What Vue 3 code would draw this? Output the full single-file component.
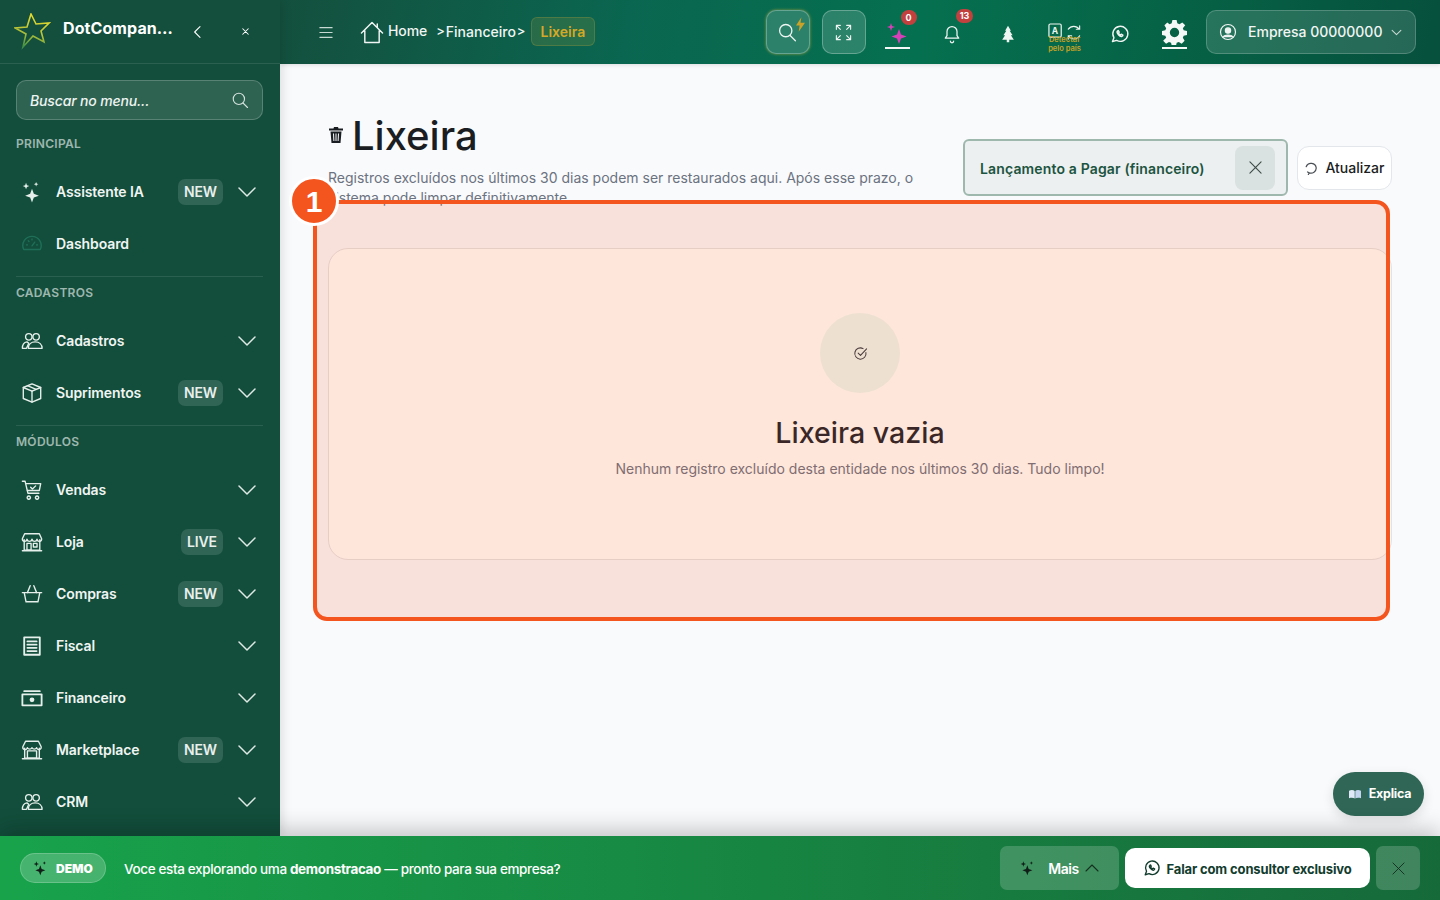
<template>
  <div class="app">
    <div class="top">
      <aside class="sidebar">
        <div class="side-head">
          <svg class="logo" viewBox="0 0 37 37" fill="none">
            <defs>
              <linearGradient id="star" x1="0.6" y1="0" x2="0.3" y2="1">
                <stop offset="0" stop-color="#e6dc2e" />
                <stop offset="0.55" stop-color="#b9c437" />
                <stop offset="1" stop-color="#3f8f45" />
              </linearGradient>
            </defs>
            <path d="M17 1L22 11 35 10 27 18 30 29 19 23 9 34 12 21 1 15 13 14Z" stroke="url(#star)" stroke-width="1.6" stroke-linejoin="miter" />
          </svg>
          <span class="brand">DotCompan…</span>
          <svg class="head-back" viewBox="0 0 24 24" fill="none" stroke="#fff" stroke-width="1.6" stroke-linecap="round" stroke-linejoin="round"><path d="M15 4l-8 8 8 8" /></svg>
          <svg class="head-x" viewBox="0 0 24 24" fill="none" stroke="#fff" stroke-width="2.2" stroke-linecap="round"><path d="M6 6l12 12M18 6L6 18" /></svg>
        </div>
        <div class="side-body">
          <div class="search">
            <span>Buscar no menu...</span>
            <svg viewBox="0 0 24 24" fill="none" stroke="#d5e2dd" stroke-width="1.5" stroke-linecap="round"><circle cx="10.5" cy="10.5" r="7.5" /><path d="M16 16l6 6" /></svg>
          </div>
          <template v-for="(section, i) in sections" :key="section.title">
            <div v-if="i > 0" class="divider"></div>
            <div class="label">{{ section.title }}</div>
            <ul class="nav">
              <li v-for="item in section.items" :key="item.text" class="nav-item">
                <svg class="nav-icon" :class="{ dim: item.icon === 'gauge', bold: item.icon === 'money' || item.icon === 'receipt' }" viewBox="0 0 24 24" fill="none" stroke="currentColor" stroke-width="1.5" stroke-linecap="round" stroke-linejoin="round">
                  <path v-for="d in icons[item.icon]" :key="d" :d="d" />
                  <circle v-if="item.icon === 'money'" cx="12" cy="14" r="2.600" fill="currentColor" stroke="none" />
                  <path v-if="item.icon === 'sparkles'" d="M12 8.500l2 5.500 5.500 2-5.500 2-2 5.500-2-5.500-5.500-2 5.500-2zM5.500 2l1 2.500 2.500 1-2.500 1-1 2.500-1-2.500-2.500-1 2.500-1zM16.500 1l.7 1.800 1.800.7-1.800.7-.7 1.800-.7-1.800-1.800-.7 1.800-.7z" fill="currentColor" stroke="none" />
                </svg>
                <span class="nav-text">{{ item.text }}</span>
                <span v-if="item.badge" class="badge">{{ item.badge }}</span>
                <svg v-if="item.arrow !== false" class="chev" viewBox="0 0 18 10" fill="none" stroke="currentColor" stroke-width="1.5" stroke-linecap="round" stroke-linejoin="round"><path d="M1 1l8 8 8-8" /></svg>
              </li>
            </ul>
          </template>
        </div>
      </aside>

      <div class="right">
        <header class="header">
          <svg class="menu" viewBox="0 0 16 14" fill="none" stroke="#c8d9d3" stroke-width="1.3" stroke-linecap="round"><path d="M1 1.500h14M1 7h14M1 12.500h14" /></svg>
          <nav class="crumbs">
            <svg class="home" viewBox="0 0 24 24" fill="none" stroke="#f0f5f3" stroke-width="1.5" stroke-linejoin="round" stroke-linecap="round"><path d="M1 12.500L12 1.500l11 11M4.500 10v12.500h15V10M17.500 3v3.500" /></svg>
            <span class="crumb home-text">Home</span>
            <span class="sep first">&gt;</span>
            <span class="crumb">Financeiro</span>
            <span class="sep">&gt;</span>
            <span class="current">Lixeira</span>
          </nav>
          <div class="tools">
            <button class="tool-btn glow">
              <svg viewBox="0 0 24 24" fill="none" stroke="#eef5f2" stroke-width="1.5" stroke-linecap="round" class="t-search"><circle cx="10" cy="11" r="7" /><path d="M15 16.500l6 6" /></svg>
              <svg viewBox="0 0 10 16" class="bolt"><path d="M6 0L0 9h4l-1 7 7-10H5z" fill="#c9a227" /></svg>
            </button>
            <button class="tool-btn">
              <svg viewBox="0 0 24 24" fill="none" stroke="#eef5f2" stroke-width="1.4" stroke-linecap="round" stroke-linejoin="round" class="t-expand"><path d="M8 3H3v5M16 3h5v5M8 21H3v-5M16 21h5v-5M3 3l5 5M21 3l-5 5M3 21l5-5M21 21l-5-5" /></svg>
            </button>
            <div class="cells">
              <div class="cell underline">
                <svg viewBox="0 0 24 24" class="i24"><path d="M14 9l2 5.500 5.500 2-5.500 2-2 5.500-2-5.500-5.500-2 5.500-2zM6 3l1 3 3 1-3 1-1 3-1-3-3-1 3-1z" fill="#d63fb8" /></svg>
                <span class="count c0">0</span>
              </div>
              <div class="cell">
                <svg viewBox="0 0 24 24" fill="none" stroke="#f0f5f3" stroke-width="1.500" stroke-linecap="round" stroke-linejoin="round" class="i20 low shift-l"><path d="M12 3a6 6 0 0 0-6 6v5l-2 3h16l-2-3V9a6 6 0 0 0-6-6zM10 20.500a2 2 0 0 0 4 0" /></svg>
                <span class="count c13">13</span>
              </div>
              <div class="cell">
                <svg viewBox="0 0 24 24" class="i20 low"><path d="M12 2l3.500 6H14l3.500 5.500H15.500L19 19h-5.500v3h-3v-3H5l3.500-5.500H6.500L10 8H8.500z" fill="#eef5f2" /></svg>
              </div>
              <div class="cell translate">
                <svg viewBox="0 0 36 20" fill="none" class="i-tr">
                  <rect x="1" y="1" width="13" height="14" rx="1.500" stroke="#eef5f2" stroke-width="1.300" />
                  <text x="4" y="12" font-size="9" font-weight="700" fill="#eef5f2" font-family="Inter, sans-serif">A</text>
                  <path d="M21.500 6.500a7 7 0 0 1 11.500 0M33.500 13.500a7 7 0 0 1-12 0M33.500 3v3.500H30M21.500 17v-3.500H25" stroke="#eef5f2" stroke-width="1.200" stroke-linecap="round" />
                </svg>
                <span class="detect">Detectar<br />pelo país</span>
              </div>
              <div class="cell">
                <svg viewBox="0 0 24 24" fill="none" stroke="#f0f5f3" stroke-width="1.700" stroke-linecap="round" stroke-linejoin="round" class="i20 low shift-r">
                  <path v-for="d in whatsapp" :key="d" :d="d" />
                </svg>
              </div>
              <div class="cell underline">
                <svg viewBox="0 0 24 24" class="i26"><path fill-rule="evenodd" d="M10 1h4l.7 3.200 2 .8 2.800-1.700 2.800 2.800L20 8.900l.8 2 3.200.7v3.800l-3.200.7-.8 2 1.700 2.800-2.800 2.800-2.800-1.700-2 .8-.7 3.200h-4l-.7-3.200-2-.8-2.800 1.700-2.800-2.800L4 18.100l-.8-2L0 15.400v-3.800l3.200-.7.8-2-1.700-2.800 2.800-2.800L7.300 5l2-.8zM12 8.500a4.500 4.500 0 1 0 0 9 4.500 4.500 0 0 0 0-9z" fill="#f4f8f6" transform="translate(0 -1)" /></svg>
              </div>
            </div>
            <button class="company">
              <svg viewBox="0 0 24 24" fill="none" stroke="#f0f5f3" stroke-width="1.600" class="i18"><circle cx="12" cy="12" r="10" /><circle cx="12" cy="10" r="3.500" fill="#f0f5f3" /><path d="M5 19c2-4 12-4 14 0" fill="#f0f5f3" /></svg>
              <span>Empresa 00000000</span>
              <svg viewBox="0 0 12 8" fill="none" stroke="#c8d9d3" stroke-width="1.200" stroke-linecap="round" stroke-linejoin="round" class="co-chev"><path d="M1 1.500l5 5 5-5" /></svg>
            </button>
          </div>
        </header>

        <main class="main">
          <div class="page-head">
            <div class="page-title">
              <h1>
                <svg viewBox="0 0 14 16" class="trash"><path d="M5 0h4l.5 1.500H14V3.500H0V1.500h4.500zM1.500 4.500h11l-1 11.500h-9zM4 6.500l.4 7.500h1L5 6.500zM6.500 6.500V14h1V6.500zM9 6.500L8.600 14h1l.4-7.500z" fill-rule="evenodd" fill="#1a1d21" /></svg>
                Lixeira
              </h1>
              <p>Registros excluídos nos últimos 30 dias podem ser restaurados aqui. Após esse prazo, o sistema pode limpar definitivamente.</p>
            </div>
            <div class="actions">
              <div class="filter">
                <span>Lançamento a Pagar (financeiro)</span>
                <button class="filter-x">
                  <svg viewBox="0 0 14 14" fill="none" stroke="#3d4a47" stroke-width="1.200" stroke-linecap="round"><path d="M1 1l12 12M13 1L1 13" /></svg>
                </button>
              </div>
              <button class="refresh">
                <svg viewBox="0 0 16 16" fill="none" stroke="#4a4f55" stroke-width="1.400" stroke-linecap="round" stroke-linejoin="round"><path d="M2.500 6.500A6 6 0 0 1 14 8a6 6 0 0 1-8 5.500M5 15.500l1-2-2-1" /></svg>
                Atualizar
              </button>
            </div>
          </div>

          <section class="empty">
            <div class="circle">
              <svg viewBox="0 0 16 16" fill="none" stroke="#2c3640" stroke-width="1.100" stroke-linecap="round" stroke-linejoin="round"><path d="M13.800 7a6 6 0 1 1-3-4.200M5.500 7.500L8 10l6.500-7" /></svg>
            </div>
            <h2>Lixeira vazia</h2>
            <p>Nenhum registro excluído desta entidade nos últimos 30 dias. Tudo limpo!</p>
          </section>
        </main>
      </div>
    </div>

    <footer class="banner">
      <span class="demo">
        <svg viewBox="0 0 24 24" class="spark"><path d="M11 8l2 5.500 5.500 2-5.500 2-2 5.500-2-5.500-5.500-2 5.500-2zM5 2l1 3 3 1-3 1-1 3-1-3-3-1 3-1zM17 2l.7 1.800 1.800.7-1.800.7L17 7l-.7-1.800-1.800-.7 1.800-.7z" fill="#0f1f18" /></svg>
        DEMO
      </span>
      <span class="banner-text">Voce esta explorando uma <b>demonstracao</b> — pronto para sua empresa?</span>
      <button class="ban-btn more">
        <svg viewBox="0 0 24 24" class="spark"><path d="M11 8l2 5.500 5.500 2-5.500 2-2 5.500-2-5.500-5.500-2 5.500-2zM5 2l1 3 3 1-3 1-1 3-1-3-3-1 3-1zM17 2l.7 1.800 1.800.7-1.800.7L17 7l-.7-1.800-1.800-.7 1.800-.7z" fill="#0f1f18" /></svg>
        <span>Mais</span>
        <svg viewBox="0 0 14 8" fill="none" stroke="#16301f" stroke-width="1.100" stroke-linecap="round" stroke-linejoin="round" class="up"><path d="M1 7l6-6 6 6" /></svg>
      </button>
      <button class="consult">
        <svg viewBox="0 0 24 24" fill="none" stroke="#123c2e" stroke-width="1.800" stroke-linecap="round" stroke-linejoin="round" class="i18">
          <path v-for="d in whatsapp" :key="d" :d="d" />
        </svg>
        <span>Falar com consultor exclusivo</span>
      </button>
      <button class="ban-btn close">
        <svg viewBox="0 0 14 14" fill="none" stroke="#16301f" stroke-width="1" stroke-linecap="round"><path d="M1 1l12 12M13 1L1 13" /></svg>
      </button>
    </footer>

    <!-- overlays -->
    <div class="hl"></div>
    <div class="hl-num">1</div>
    <button class="explain">
      <svg viewBox="0 0 16 12" class="book"><path d="M0 1.500C3 .5 6 .5 7.600 2v10C6 10.700 3 10.700 0 11.500z" fill="#dfe9f7" /><path d="M16 1.500C13 .5 10 .5 8.400 2v10c1.600-1.300 4.600-1.300 7.600-.5z" fill="#c2d4ee" /></svg>
      Explica
    </button>
  </div>
</template>

<script setup>
const whatsapp = [
  'M3 21l1.700-4.600A9 9 0 1 1 8 19.600z',
  'M9 8.500c-.8.800-.6 2.300.8 4 1.500 1.700 3.300 2.800 4.500 2.300.6-.2 1.200-.8 1.200-1.500l-2-1-.9.800c-1-.4-2-1.500-2.400-2.400l.8-.9-1-2c-.4 0-.7.300-1 .7z'
]

const icons = {
  sparkles: [],
  gauge: ['M3 18a10 10 0 1 1 18 0z', 'M12 14l3-4', 'M6 13h1M17 13h1M8 8.500l.7.700M12 6.500v1'],
  users: ['M8.500 4a3.500 3.500 0 1 1 0 7 3.500 3.500 0 0 1 0-7z', 'M16.500 4a3.500 3.500 0 1 1 0 7 3.500 3.500 0 0 1 0-7z', 'M1.500 20c0-3.500 2-6.500 5-7l2 1.500L6 20z', 'M8 20c0-4 3-7 7.500-7s7.500 3 7.500 7z'],
  box: ['M12 2l9.500 4v12L12 22l-9.500-4V6z', 'M2.500 6L12 10l9.500-4', 'M12 10v12', 'M7 4l9.500 4'],
  cart: ['M1.500 2.500h3l3 13h12', 'M5.500 5h16l-1.500 7.500H7', 'M10.500 9l2 2 3.500-3.500', 'M8.500 18.500a1.800 1.800 0 1 0 .01 0zM17.500 18.500a1.800 1.800 0 1 0 .01 0z'],
  shop: ['M3.500 9.500V21h17V9.500', 'M1.500 21.500h21', 'M4 3h16l2.500 5.500a2.500 2.500 0 0 1-5 .5 2.800 2.800 0 0 1-5.500 0 2.800 2.800 0 0 1-5.500 0 2.500 2.500 0 0 1-5-.5z', 'M6.500 13.500h4.500V21H6.500zM13.500 13.500h4v4h-4z'],
  basket: ['M1.500 10.500h21', 'M3.500 10.500l2 10h13l2-10', 'M7 10.500L10 3M17 10.500L14 3'],
  receipt: ['M3.500 2.500h17v19h-17z', 'M7 7h10M7 10.500h10M7 14h10M7 17.500h10'],
  money: ['M3.500 4.500h17', 'M1.500 8h21v12H1.500z'],
  market: ['M4 10v11h16V10', 'M1.500 21.500h21', 'M5 2.500h14l3 6a2.500 2.500 0 0 1-5 1 2.800 2.800 0 0 1-5 0 2.800 2.800 0 0 1-5 0 2.500 2.500 0 0 1-5-1z', 'M7 13h10v8H7z']
}

const sections = [
  {
    title: 'PRINCIPAL',
    items: [
      { text: 'Assistente IA', icon: 'sparkles', badge: 'NEW' },
      { text: 'Dashboard', icon: 'gauge', arrow: false }
    ]
  },
  {
    title: 'CADASTROS',
    items: [
      { text: 'Cadastros', icon: 'users' },
      { text: 'Suprimentos', icon: 'box', badge: 'NEW' }
    ]
  },
  {
    title: 'MÓDULOS',
    items: [
      { text: 'Vendas', icon: 'cart' },
      { text: 'Loja', icon: 'shop', badge: 'LIVE' },
      { text: 'Compras', icon: 'basket', badge: 'NEW' },
      { text: 'Fiscal', icon: 'receipt' },
      { text: 'Financeiro', icon: 'money' },
      { text: 'Marketplace', icon: 'market', badge: 'NEW' },
      { text: 'CRM', icon: 'users' }
    ]
  }
]
</script>

<style>
html, body {
  margin: 0;
  height: 100%;
  overflow: hidden;
  background: #f9fafc;
}
</style>

<style scoped>
.app {
  position: relative;
  width: 1440px;
  height: 900px;
  overflow: hidden;
  display: flex;
  flex-direction: column;
  font-family: Inter, "Liberation Sans", sans-serif;
  color: #1a1d21;
}
button {
  font-family: inherit;
  cursor: pointer;
}
.top {
  flex: 1;
  min-height: 0;
  display: flex;
}

/* sidebar */
.sidebar {
  width: 280px;
  flex-shrink: 0;
  background: #124e3b;
  color: #f0f5f3;
  overflow: hidden;
  box-shadow: 2px 0 10px rgba(0, 0, 0, 0.12);
  z-index: 2;
}
.side-head {
  height: 63px;
  border-bottom: 1px solid rgba(255, 255, 255, 0.1);
  background: #144f3d;
  display: flex;
  align-items: center;
  padding-left: 14px;
}
.logo {
  width: 37px;
  height: 37px;
  flex-shrink: 0;
}
.brand {
  width: 113px;
  margin-left: 12px;
  margin-top: -7px;
  font-size: 16px;
  font-weight: 700;
  letter-spacing: 0.1px;
  color: #fff;
  white-space: nowrap;
}
.head-back {
  width: 16px;
  height: 16px;
  margin-left: 14px;
}
.head-x {
  width: 11px;
  height: 11px;
  margin-left: 34px;
}
.side-body {
  padding: 16px 17px 0 16px;
}
.search {
  height: 38px;
  border: 1px solid rgba(255, 255, 255, 0.2);
  background: rgba(255, 255, 255, 0.12);
  border-radius: 10px;
  display: flex;
  align-items: center;
  justify-content: space-between;
  padding: 0 13px;
  font-size: 14px;
  font-style: italic;
  font-weight: 500;
  letter-spacing: -0.15px;
  color: #eef4f1;
}
.search svg {
  width: 18px;
  height: 18px;
}
.label {
  margin-top: 16px;
  height: 16px;
  line-height: 16px;
  font-size: 12px;
  font-weight: 600;
  letter-spacing: 0.3px;
  color: rgba(255, 255, 255, 0.6);
}
.divider + .label {
  margin-top: 8px;
}
.divider {
  height: 1px;
  margin-top: 6px;
  background: rgba(255, 255, 255, 0.1);
}
.nav {
  list-style: none;
  margin: 14px 0 0;
  padding: 0;
}
.nav-item {
  height: 52px;
  display: flex;
  align-items: center;
  padding-left: 5px;
  font-size: 14px;
  font-weight: 600;
  letter-spacing: -0.1px;
}
.nav-icon {
  width: 22px;
  height: 22px;
  flex-shrink: 0;
  color: #e6efeb;
}
.nav-icon.dim {
  color: #1f6f58;
}
.nav-icon.bold {
  stroke-width: 2;
}
.nav-text {
  margin: -1px 0 0 13px;
  flex: 1;
}
.badge {
  height: 26px;
  line-height: 26px;
  padding: 0 6px;
  border-radius: 7px;
  background: rgba(255, 255, 255, 0.13);
  font-size: 14px;
  color: #e8f0ed;
}
.chev {
  width: 18px;
  height: 10px;
  margin: 0 7px 0 15px;
  color: #dfe9e5;
}

/* header */
.right {
  flex: 1;
  min-width: 0;
  display: flex;
  flex-direction: column;
}
.header {
  height: 64px;
  flex-shrink: 0;
  display: flex;
  align-items: center;
  padding: 0 24px 0 39px;
  background: linear-gradient(100deg, #14503e 0%, #0a6650 30%, #05704f 55%, #066044 80%, #06503d 100%);
  box-shadow: 0 1px 4px rgba(0, 0, 0, 0.12);
  z-index: 1;
}
.menu {
  width: 14px;
  height: 13px;
  flex-shrink: 0;
}
.crumbs {
  display: flex;
  align-items: center;
  margin: -2px 0 0 27px;
  color: #f0f5f3;
  font-size: 14px;
  font-weight: 500;
}
.home {
  width: 24px;
  height: 23px;
  margin-top: 2px;
}
.home-text {
  margin: -2px 0 0 4px;
  letter-spacing: -0.1px;
}
.sep {
  margin: 0 2px 0 1px;
  font-size: 13px;
}
.sep.first {
  margin: 0 1px 0 9px;
}
.current {
  margin-left: 3px;
  height: 27px;
  line-height: 27px;
  padding: 0 9px;
  border: 1px solid rgba(212, 175, 55, 0.22);
  border-radius: 6px;
  background: rgba(212, 175, 55, 0.14);
  color: #d4a927;
  font-weight: 600;
}
.tools {
  margin-left: auto;
  display: flex;
  align-items: center;
}
.tool-btn {
  position: relative;
  width: 44px;
  height: 44px;
  margin-right: 12px;
  padding: 0;
  display: flex;
  align-items: center;
  justify-content: center;
  border: 1px solid rgba(255, 255, 255, 0.28);
  border-radius: 10px;
  background: rgba(255, 255, 255, 0.15);
}
.tool-btn.glow {
  box-shadow: 0 0 3px rgba(212, 175, 55, 0.7);
}
.t-search {
  width: 21px;
  height: 21px;
  margin-top: -1px;
}
.bolt {
  position: absolute;
  top: 6px;
  right: 4px;
  width: 9px;
  height: 15px;
}
.t-expand {
  width: 19px;
  height: 19px;
}
.cells {
  display: grid;
  grid-template-columns: repeat(6, 55.4px);
  margin-left: -8px;
  margin-right: 4px;
}
.cell {
  position: relative;
  height: 44px;
  display: flex;
  align-items: center;
  justify-content: center;
}
.cell.underline::after {
  content: "";
  position: absolute;
  left: 15px;
  right: 15px;
  bottom: 5px;
  height: 2px;
  background: #f4f8f6;
}
.i24 {
  width: 24px;
  height: 24px;
}
.i20 {
  width: 20px;
  height: 20px;
}
.low {
  margin-top: 4px;
}
.shift-l {
  margin-left: -2px;
}
.shift-r {
  margin-left: 2px;
}
.i26 {
  width: 25px;
  height: 25px;
  margin-top: 1px;
}
.i18 {
  width: 18px;
  height: 18px;
}
.count {
  position: absolute;
  border-radius: 999px;
  background: #c2413f;
  color: #fff;
  font-size: 9px;
  font-weight: 700;
  text-align: center;
}
.c0 {
  top: 0;
  left: 31px;
  width: 16px;
  height: 15px;
  line-height: 15px;
}
.c13 {
  top: -1px;
  left: 31px;
  width: 17px;
  height: 14px;
  line-height: 14px;
}
.translate {
  flex-direction: column;
  justify-content: flex-start;
  padding-top: 13px;
  height: 31px;
}
.i-tr {
  width: 34px;
  height: 19px;
  flex-shrink: 0;
  margin-left: 2px;
}
.detect {
  margin: -6px 0 0 2px;
  color: #c9a227;
  font-size: 7.500px;
  font-weight: 600;
  line-height: 8.500px;
  text-align: center;
  white-space: nowrap;
}
.company {
  width: 210px;
  height: 44px;
  display: flex;
  align-items: center;
  padding: 0 13px 0 12px;
  border: 1px solid rgba(255, 255, 255, 0.2);
  border-radius: 10px;
  background: rgba(255, 255, 255, 0.13);
  color: #f2f6f4;
  font-size: 14px;
  font-weight: 500;
}
.company span {
  margin: -1px 0 0 11px;
  flex: 1;
  text-align: left;
}
.co-chev {
  width: 11px;
  height: 7px;
}

/* main */
.main {
  flex: 1;
  min-height: 0;
  padding: 47px 48px 0;
  background: #f9fafc;
}
.page-head {
  display: flex;
  justify-content: space-between;
}
.page-title {
  width: 600px;
}
.page-title h1 {
  margin: 0;
  display: flex;
  align-items: center;
  gap: 9px;
  height: 48px;
  font-size: 40px;
  font-weight: 500;
  color: #1a1d21;
}
.trash {
  width: 14px;
  height: 16px;
  margin-left: 1px;
}
.page-title p {
  margin: 9px 0 0;
  font-size: 14px;
  line-height: 20px;
  color: #6b7280;
}
.actions {
  display: flex;
  align-items: center;
  gap: 9px;
  height: 57px;
  margin-top: 28px;
}
.filter {
  width: 325px;
  height: 57px;
  box-sizing: border-box;
  display: flex;
  align-items: center;
  justify-content: space-between;
  padding: 0 11px 0 15px;
  border: 2px solid #9fb8ae;
  border-radius: 6px;
  background: #ecf0f0;
  color: #1c5441;
  font-size: 14px;
  font-weight: 600;
  letter-spacing: 0.15px;
}
.filter span {
  margin-top: 2px;
}
.filter-x {
  width: 40px;
  height: 44px;
  padding: 0;
  display: flex;
  align-items: center;
  justify-content: center;
  border: none;
  border-radius: 8px;
  background: #d9e2e0;
}
.filter-x svg {
  width: 13px;
  height: 13px;
}
.refresh {
  width: 95px;
  height: 44px;
  padding: 0;
  display: flex;
  align-items: center;
  justify-content: center;
  gap: 7px;
  border: 1px solid #e3e6ea;
  border-radius: 12px;
  background: #fff;
  color: #1a1d21;
  font-size: 14px;
  font-weight: 500;
}
.refresh svg {
  width: 14px;
  height: 14px;
}
.empty {
  margin-top: 40px;
  height: 312px;
  box-sizing: border-box;
  padding-top: 64px;
  display: flex;
  flex-direction: column;
  align-items: center;
  border: 1px solid #e5e3e2;
  border-radius: 20px;
  background: #fffffc;
}
.circle {
  width: 80px;
  height: 80px;
  border-radius: 50%;
  background: #ecf8f0;
  display: flex;
  align-items: center;
  justify-content: center;
}
.circle svg {
  width: 15px;
  height: 15px;
}
.empty h2 {
  margin: 22px 0 0;
  font-size: 28.600px;
  line-height: 36px;
  font-weight: 500;
  color: #1a1f2a;
}
.empty p {
  margin: 8px 0 0;
  font-size: 14px;
  line-height: 20px;
  color: #6b7280;
}

/* banner */
.banner {
  position: relative;
  z-index: 3;
  height: 64px;
  flex-shrink: 0;
  display: flex;
  align-items: center;
  padding: 0 20px;
  background: linear-gradient(90deg, #18a34b 0%, #166a3a 100%);
  box-shadow: 0 -6px 22px rgba(0, 0, 0, 0.22);
}
.demo {
  width: 86px;
  height: 30px;
  box-sizing: border-box;
  display: flex;
  align-items: center;
  justify-content: center;
  gap: 7px;
  border: 1px solid rgba(255, 255, 255, 0.2);
  border-radius: 15px;
  background: rgba(255, 255, 255, 0.2);
  color: #fff;
  font-size: 12px;
  font-weight: 900;
}
.spark {
  width: 16px;
  height: 16px;
}
.banner-text {
  margin: 1px 0 0 18px;
  flex: 1;
  color: #fff;
  font-size: 13.500px;
  font-weight: 500;
  letter-spacing: -0.36px;
}
.banner-text b {
  font-weight: 700;
}
.ban-btn {
  height: 44px;
  padding: 0;
  display: flex;
  align-items: center;
  justify-content: center;
  border: none;
  border-radius: 7px;
  background: rgba(255, 255, 255, 0.18);
}
.more {
  width: 119px;
  gap: 6px;
  color: #fff;
  font-size: 14px;
  font-weight: 600;
}
.more span {
  letter-spacing: -0.5px;
}
.more .spark {
  margin-right: 6px;
}
.up {
  width: 14px;
  height: 8px;
}
.consult {
  width: 245px;
  height: 40px;
  margin: 0 6px;
  padding: 0;
  display: flex;
  align-items: center;
  justify-content: center;
  gap: 5px;
  border: none;
  border-radius: 10px;
  background: #fff;
  color: #123c2e;
  font-size: 13px;
  font-weight: 700;
  letter-spacing: -0.14px;
}
.consult span {
  margin-top: 1px;
}
.close {
  width: 44px;
}
.close svg {
  width: 13px;
  height: 13px;
}

/* tour highlight and floating button */
.hl {
  position: absolute;
  left: 313px;
  top: 200px;
  width: 1077px;
  height: 421px;
  box-sizing: border-box;
  border: 4px solid #f4551f;
  border-radius: 14px;
  background: rgba(248, 80, 30, 0.145);
}
.hl-num {
  position: absolute;
  left: 289px;
  top: 176px;
  width: 44px;
  height: 44px;
  border: 3px solid #fff;
  border-radius: 50%;
  background: #f4551f;
  color: #fff;
  font-family: "Liberation Sans", sans-serif;
  font-size: 30px;
  font-weight: 700;
  line-height: 45px;
  text-align: center;
}
.explain {
  position: absolute;
  left: 1333px;
  top: 772px;
  width: 91px;
  height: 44px;
  padding: 0 0 2px 3px;
  display: flex;
  align-items: center;
  justify-content: center;
  gap: 8px;
  border: none;
  border-radius: 22px;
  background: #2f6655;
  box-shadow: 0 4px 12px rgba(0, 0, 0, 0.12);
  color: #fff;
  font-size: 12.500px;
  font-weight: 700;
  letter-spacing: -0.25px;
}
.book {
  width: 12px;
  height: 10px;
  margin-top: 2px;
}
</style>
